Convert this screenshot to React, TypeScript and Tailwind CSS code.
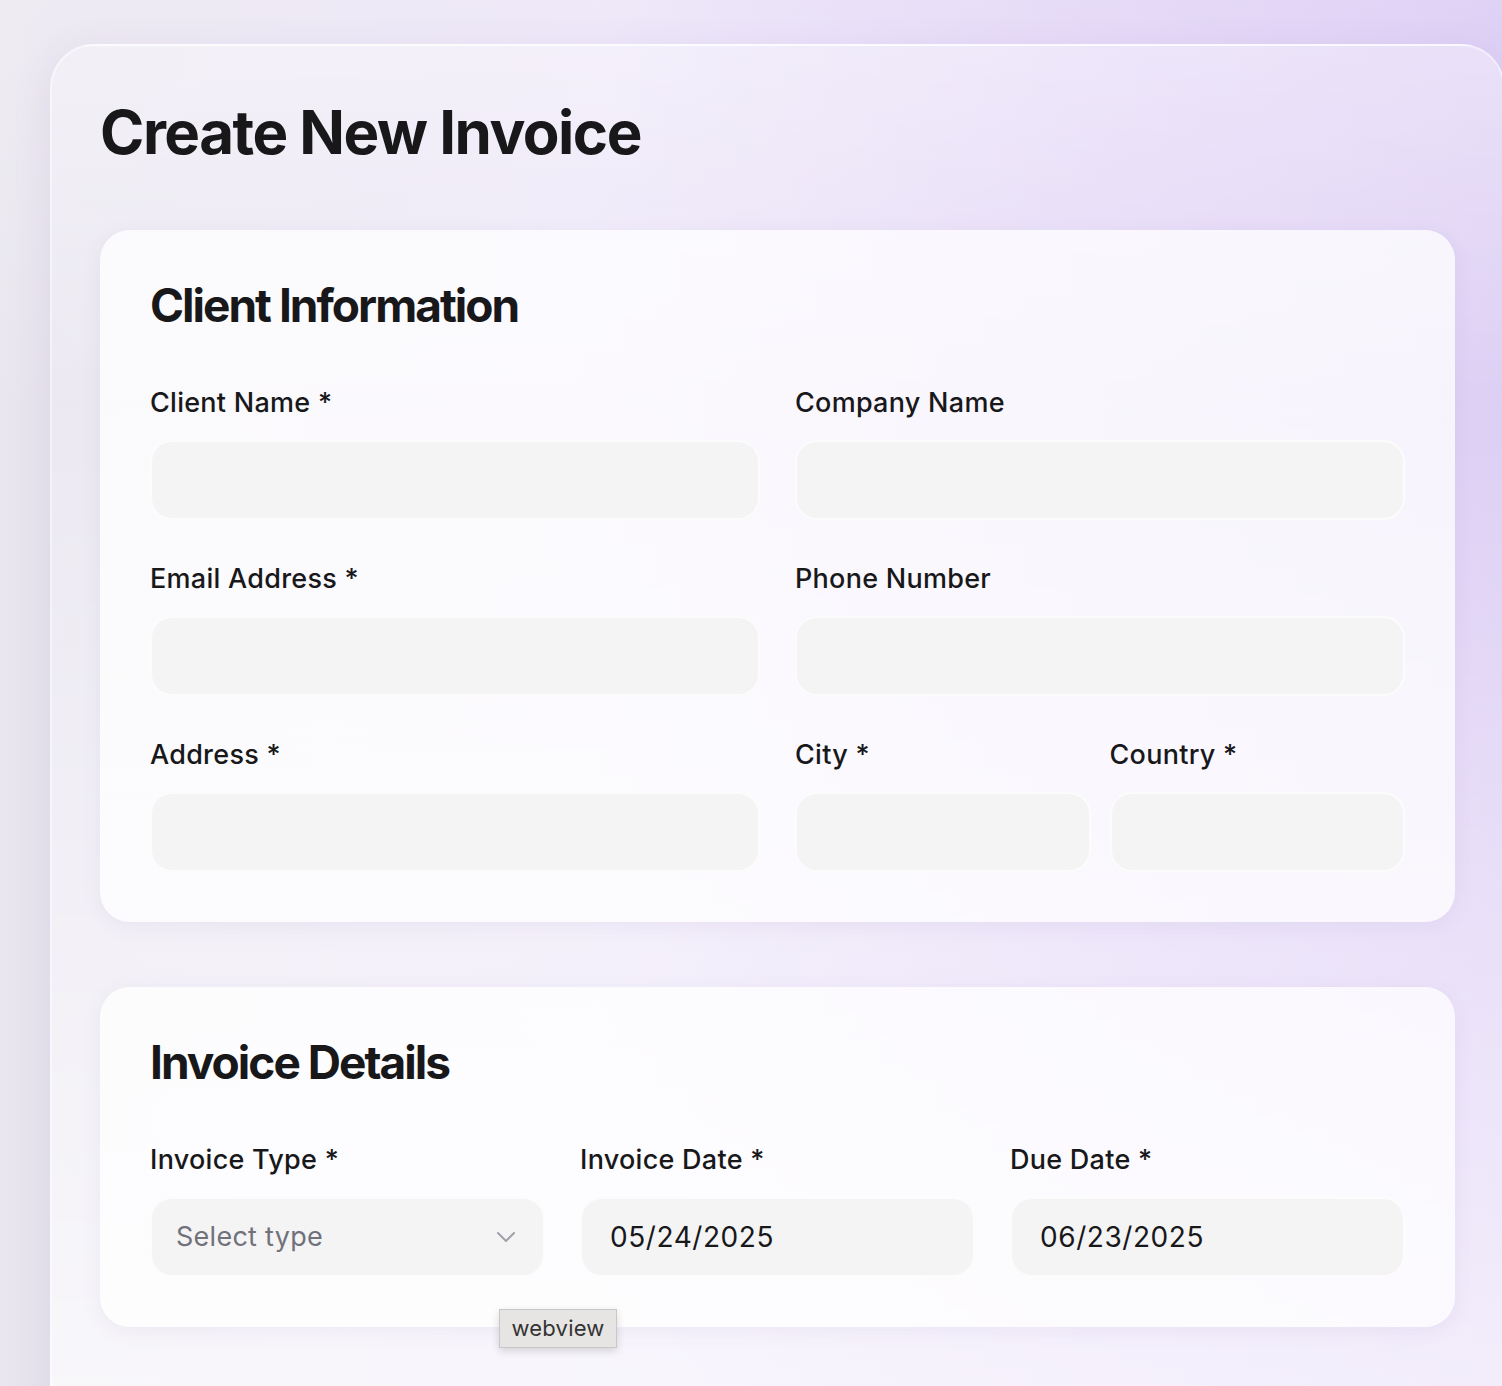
import React from "react";

function Field({ label }: { label: string }) {
  return (
    <div className="flex flex-col">
      <label className="text-[27px] leading-[32px] font-medium text-[#18181b] tracking-[0.01em]">{label}</label>
      <div className="mt-[21px] h-[80px] rounded-[22px] bg-[#f4f4f5] border-2 border-white/70" />
    </div>
  );
}

function ValueField({ label, value, placeholder, select }: { label: string; value?: string; placeholder?: string; select?: boolean }) {
  return (
    <div className="flex flex-col">
      <label className="text-[27px] leading-[32px] font-medium text-[#18181b] tracking-[0.01em]">{label}</label>
      <div className="mt-[21px] h-[80px] rounded-[22px] bg-[#f4f4f5] border-2 border-white/70 flex items-center justify-between pl-[26px] pr-[26px]">
        {value ? (
          <span className="text-[28px] text-[#18181b] tracking-[0.02em] pl-[2px]">{value}</span>
        ) : (
          <span className="text-[27px] text-[#71717a] tracking-[0.01em] -ml-[2px]">{placeholder}</span>
        )}
        {select && (
          <svg width="22" height="14" viewBox="0 0 22 14" fill="none">
            <path d="M3 3l8 8 8-8" stroke="#a1a1aa" strokeWidth="2" strokeLinecap="round" strokeLinejoin="round" />
          </svg>
        )}
      </div>
    </div>
  );
}

export default function App() {
  return (
    <div
      className="relative min-h-[1386px] w-full overflow-hidden"
      style={{ fontFamily: "Inter, 'Noto Sans', sans-serif" }}
    >
      <div className="absolute inset-0 bg-[linear-gradient(to_right,#e9e6ee_0px,#e7e3ee_50px,#e9e1f7_40%,#ddcef5_75%,#d5c3f2_100%)]" />
      <div className="absolute inset-0 bg-[linear-gradient(to_bottom,rgba(255,255,255,0.25)_0%,rgba(255,255,255,0)_30%,rgba(255,255,255,0)_100%)]" />
      <div className="relative pl-[50px] pt-[44px]">
        <div className="w-[1455px] min-h-[1400px] rounded-[44px] border-2 border-white/40 bg-[linear-gradient(to_bottom,rgba(255,255,255,0.35)_0%,rgba(255,255,255,0.2)_25%,rgba(255,255,255,0.5)_65%,rgba(255,255,255,0.72)_100%)] px-[48px] pt-[50px] shadow-[0_10px_40px_rgba(120,90,170,0.10)]">
          <h1 className="text-[60px] leading-[72px] font-bold text-[#18181b] tracking-[-0.025em]">Create New Invoice</h1>

          <section className="mt-[62px] w-[1355px] rounded-[30px] bg-white/75 shadow-[0_4px_20px_rgba(120,90,170,0.08)] px-[50px] pt-[49px] pb-[50px]">
            <h2 className="text-[46px] leading-[52px] font-bold text-[#18181b] tracking-[-0.043em]">Client Information</h2>
            <div className="mt-[56px] grid grid-cols-2 gap-x-[35px] gap-y-[43px]">
              <Field label="Client Name *" />
              <Field label="Company Name" />
              <Field label="Email Address *" />
              <Field label="Phone Number" />
              <Field label="Address *" />
              <div className="grid grid-cols-2 gap-x-[19px]">
                <Field label="City *" />
                <Field label="Country *" />
              </div>
            </div>
          </section>

          <section className="mt-[65px] w-[1355px] rounded-[30px] bg-white/75 shadow-[0_4px_20px_rgba(120,90,170,0.08)] px-[50px] pt-[49px] pb-[50px]">
            <h2 className="text-[46px] leading-[52px] font-bold text-[#18181b] tracking-[-0.043em]">Invoice Details</h2>
            <div className="mt-[56px] grid grid-cols-3 gap-x-[35px]">
              <ValueField label="Invoice Type *" placeholder="Select type" select />
              <ValueField label="Invoice Date *" value="05/24/2025" />
              <ValueField label="Due Date *" value="06/23/2025" />
            </div>
          </section>
        </div>
      </div>

      <div className="absolute left-[499px] top-[1309px] h-[39px] w-[118px] flex items-center justify-center bg-[#e6e5e3] border border-[#c9c8c6] shadow-[0_3px_8px_rgba(0,0,0,0.15)] text-[22px] text-[#333] tracking-[0.01em]">
        webview
      </div>
    </div>
  );
}
